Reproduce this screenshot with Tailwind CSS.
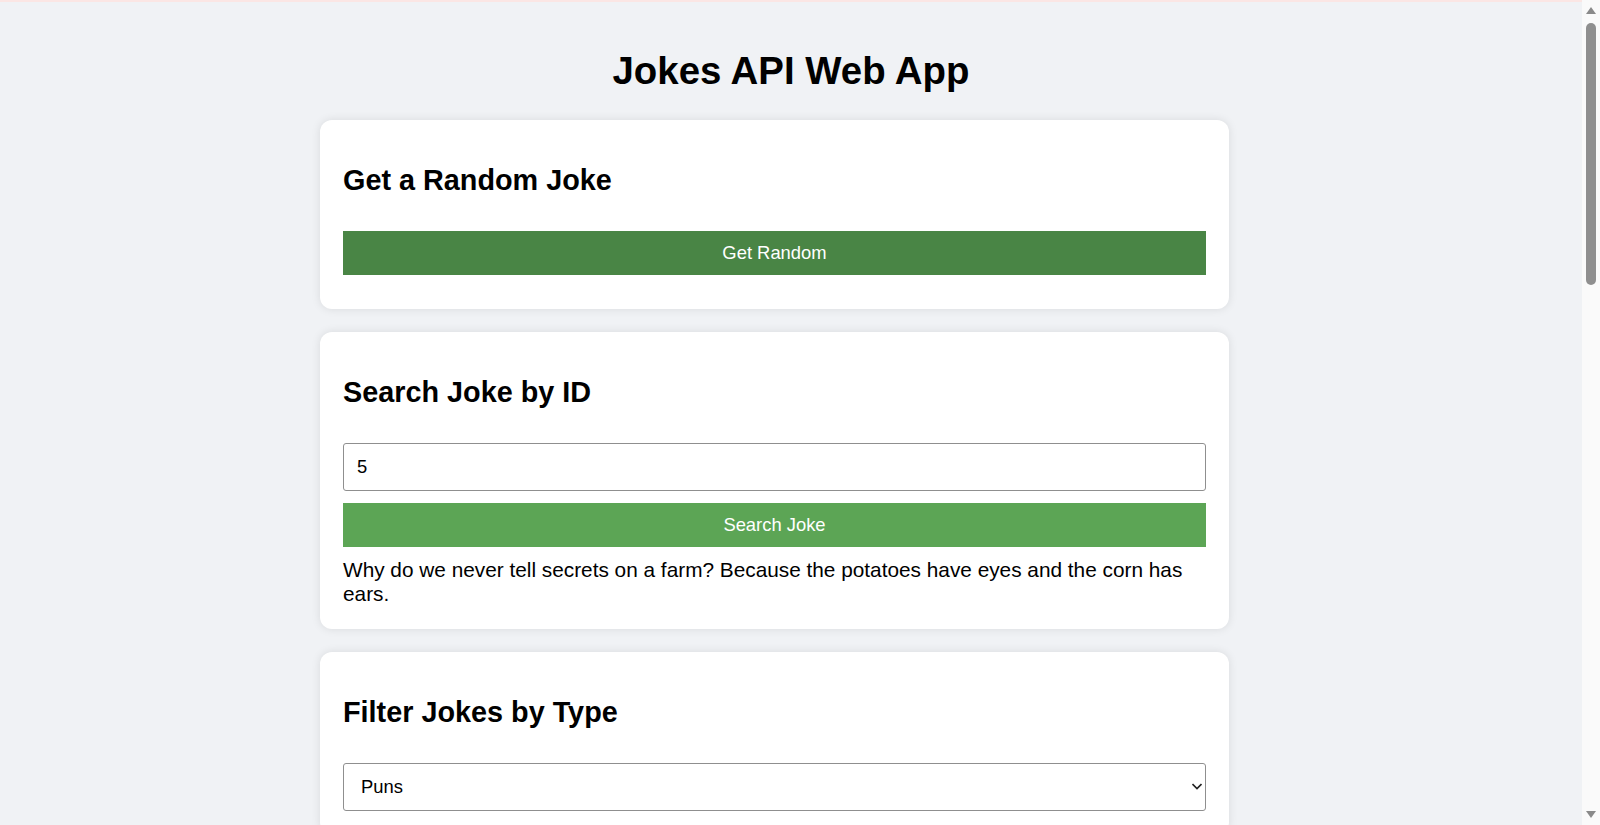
<!DOCTYPE html>
<html lang="en">
<head>
  <meta charset="UTF-8" />
  <meta name="viewport" content="width=device-width, initial-scale=1.0" />
  <title>Jokes API Web App</title>
  <script src="https://cdn.jsdelivr.net/npm/@tailwindcss/browser@4"></script>
</head>
<body class="h-[825px] overflow-hidden flex bg-[#f0f2f5] text-black font-['Liberation_Sans',Arial,sans-serif]">
  <!-- page -->
  <div class="flex-1 h-full overflow-hidden border-t-2 border-[#fbe6e4]">
    <h1 class="text-center text-[38.4px] leading-[44px] font-bold mt-[47px] mb-[27px]">Jokes API Web App</h1>

    <div class="w-[909px] ml-[320px] flex flex-col gap-[23px]">
      <section class="bg-white rounded-[12px] shadow-[0_0_10px_rgba(0,0,0,0.1)] px-[23px] pt-[44px] pb-[34px]">
        <h2 class="text-[28.8px] leading-[33px] font-bold mb-[34px]">Get a Random Joke</h2>
        <button class="w-full h-[44px] bg-[#498545] text-white text-[18.4px]">Get Random</button>
      </section>

      <section class="bg-white rounded-[12px] shadow-[0_0_10px_rgba(0,0,0,0.1)] px-[23px] pt-[44px] pb-[23px]">
        <h2 class="text-[28.8px] leading-[33px] font-bold mb-[34px]">Search Joke by ID</h2>
        <input type="text" value="5" class="block w-full h-[48px] border border-[#8f8f8f] rounded-[3px] px-[13px] text-[18.4px] text-black" />
        <button class="block w-full h-[44px] mt-[12px] bg-[#5ca555] text-white text-[18.4px]">Search Joke</button>
        <p class="text-[20.8px] leading-[24px] mt-[11px]">Why do we never tell secrets on a farm? Because the potatoes have eyes and the corn has ears.</p>
      </section>

      <section class="bg-white rounded-[12px] shadow-[0_0_10px_rgba(0,0,0,0.1)] px-[23px] pt-[44px] pb-[23px]">
        <h2 class="text-[28.8px] leading-[33px] font-bold mb-[34px]">Filter Jokes by Type</h2>
        <div class="relative">
          <select class="block w-full h-[48px] border border-[#8f8f8f] rounded-[3px] pl-[17px] text-[18.4px] text-black appearance-none bg-white">
            <option>Puns</option>
          </select>
          <svg class="absolute right-[4px] top-[20px] w-[10px] h-[7px]" viewBox="0 0 10 7" fill="none" stroke="#222" stroke-width="1.6"><path d="M0.5 1l4.5 4.5L9.5 1" /></svg>
        </div>
      </section>
    </div>
  </div>

  <!-- scrollbar -->
  <div class="w-[18px] h-full shrink-0 bg-[#fafafa] flex flex-col items-center pt-[7px] pb-[7px]">
    <div class="w-0 h-0 border-l-[5px] border-r-[5px] border-b-[7px] border-l-transparent border-r-transparent border-b-[#8a8a8a]"></div>
    <div class="w-[10px] h-[262px] mt-[9px] rounded-full bg-[#8f8f8f]"></div>
    <div class="flex-1"></div>
    <div class="w-0 h-0 border-l-[5px] border-r-[5px] border-t-[7px] border-l-transparent border-r-transparent border-t-[#8a8a8a]"></div>
  </div>
</body>
</html>
